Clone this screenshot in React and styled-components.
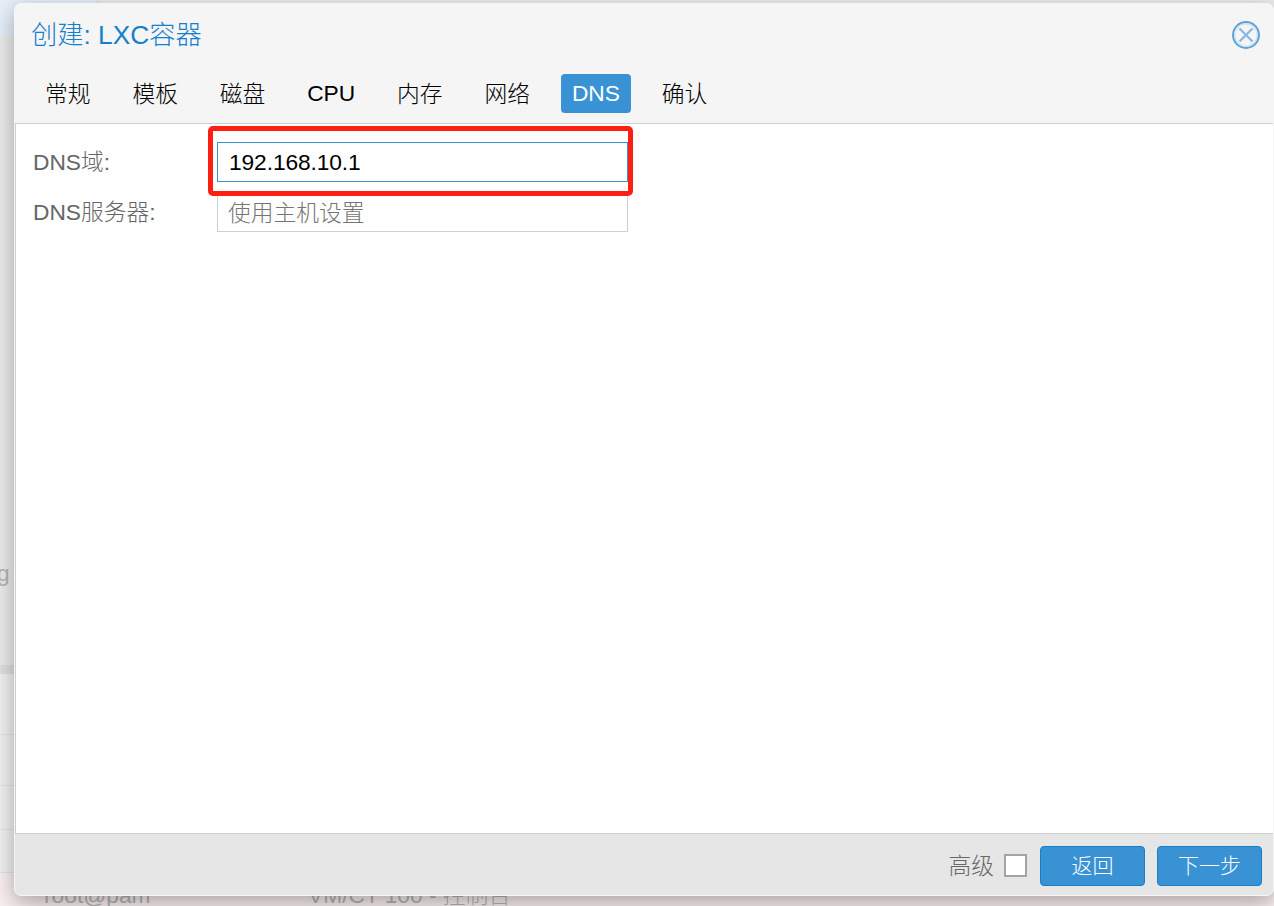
import React from 'react';
import styled, { createGlobalStyle } from 'styled-components';

const Global = createGlobalStyle`
  * { box-sizing: border-box; }
  body {
    margin: 0;
    font-family: "Liberation Sans", "Noto Sans CJK SC", sans-serif;
    font-size: 22.75px;
    font-weight: 300;
    color: #000;
  }
`;

const Screen = styled.div`
  position: relative;
  width: 1274px;
  height: 906px;
  overflow: hidden;
  background: #ebebeb;
`;

const Backdrop = styled.div`
  display: flex;
  flex-direction: column;
  height: 100%;
  color: #b4b4b4;
`;

const TreeTop = styled.div`
  flex: none;
  width: 98px;
  height: 36px;
  background: #e6eef8;
  border-right: 1px solid #d8d8d8;
`;

const TreeArea = styled.div`
  flex: none;
  height: 629px;
  padding-top: 523px;
  line-height: 28px;
  text-indent: -3px;
`;

const Splitter = styled.div`
  flex: none;
  height: 9px;
  background: #dfdfdf;
`;

const LogRow = styled.div`
  flex: none;
  height: ${(p) => p.$h}px;
  background: #f0f0f0;
  border-bottom: 1px solid #e2e2e2;
`;

const TaskRow = styled.div`
  flex: 1;
  display: flex;
  padding: 8px 0 0 44px;
  line-height: 28px;
  white-space: nowrap;
  background: #f9efef;
`;

const TaskCell = styled.span`
  flex: none;
  width: ${(p) => p.$w}px;
`;

const Dialog = styled.section`
  position: absolute;
  left: 14px;
  top: 3px;
  width: 1260px;
  height: 893px;
  display: flex;
  flex-direction: column;
  border: 1px solid #f5f5f5;
  border-radius: 7px;
  background: #f5f5f5;
  box-shadow: 0 7px 22px rgba(0, 0, 0, 0.32);
`;

const TitleBar = styled.header`
  flex: none;
  height: 62px;
  padding: 0 12px 0 16px;
  display: flex;
  align-items: center;
  justify-content: space-between;
`;

const Title = styled.h1`
  margin: 0;
  font-size: 26.25px;
  line-height: 36px;
  font-weight: 300;
  color: #157fcc;
`;

const CloseIcon = styled.svg`
  width: 30px;
  height: 30px;
`;

const Tabs = styled.nav`
  flex: none;
  height: 57px;
  padding: 8px 0 0 19px;
  display: flex;
  gap: 19.9px;
`;

const Tab = styled.div`
  height: 39px;
  padding: 0 11px;
  border-radius: 4px;
  line-height: ${(p) => (p.$latin ? 39 : 41)}px;
  color: ${(p) => (p.$active ? '#fff' : '#000')};
  background: ${(p) => (p.$active ? '#3892d4' : 'transparent')};
`;

const Body = styled.main`
  position: relative;
  flex: 1;
  padding: 18px 17px;
  border: 1px solid #cfcfcf;
  border-width: 1px 0 1px 1px;
  background: #fff;
`;

const Field = styled.div`
  display: flex;
  height: 40px;
  margin-bottom: 10px;
`;

const Label = styled.label`
  width: 184px;
  line-height: 41px;
  color: #666;
`;

const Input = styled.div`
  width: 411px;
  padding-left: ${(p) => (p.$placeholder ? 10 : 11)}px;
  line-height: ${(p) => (p.$placeholder ? 40 : 38)}px;
  letter-spacing: ${(p) => (p.$placeholder ? 0 : -0.1)}px;
  border: 1px solid ${(p) => (p.$focused ? '#3892d4' : '#cfcfcf')};
  color: ${(p) => (p.$placeholder ? '#757575' : '#000')};
`;

const Highlight = styled.div`
  position: absolute;
  left: 192px;
  top: 2px;
  width: 425px;
  height: 70px;
  border: 5px solid #ff1e12;
  border-radius: 5px;
`;

const Footer = styled.footer`
  flex: none;
  height: 61px;
  padding: 12px 11px 0 0;
  display: flex;
  justify-content: flex-end;
  border-radius: 0 0 6px 6px;
  background: #e6e6e6;
`;

const Advanced = styled.label`
  display: flex;
  line-height: 40px;
  color: #666;
`;

const Checkbox = styled.span`
  width: 23px;
  height: 23px;
  margin: 8px 13px 0 10px;
  border: 2px solid #a4a4a4;
  background: #fff;
`;

const Button = styled.button`
  width: 105px;
  height: 40px;
  margin: 0 0 0 ${(p) => p.$gap || 0}px;
  padding: 0;
  border: 1px solid #157fcc;
  border-radius: 4px;
  background: #3892d4;
  color: #fff;
  font: inherit;
  font-size: 21px;
  line-height: 38px;
`;

export default function App() {
  const tabs = ['常规', '模板', '磁盘', 'CPU', '内存', '网络', 'DNS', '确认'];
  return (
    <Screen>
      <Global />
      <Backdrop>
        <TreeTop />
        <TreeArea>g</TreeArea>
        <Splitter />
        <LogRow $h={61} />
        <LogRow $h={51} />
        <LogRow $h={44} />
        <LogRow $h={43} />
        <TaskRow>
          <TaskCell $w={264}>root@pam</TaskCell>
          <TaskCell $w={300}>VM/CT 100 - 控制台</TaskCell>
        </TaskRow>
      </Backdrop>
      <Dialog>
        <TitleBar>
          <Title>创建: LXC容器</Title>
          <CloseIcon viewBox="0 0 30 30" fill="none">
            <circle cx="15" cy="15" r="12.9" stroke="#5fa3d5" strokeWidth="2.1" />
            <circle cx="15" cy="15" r="11.2" stroke="#cfe2f2" strokeWidth="1.4" />
            <path d="M8.5 8.5L21.5 21.5M21.5 8.5L8.5 21.5" stroke="#8ab8e2" strokeWidth="2.3" />
          </CloseIcon>
        </TitleBar>
        <Tabs>
          {tabs.map((t) => (
            <Tab key={t} $active={t === 'DNS'} $latin={/^[A-Z]+$/.test(t)}>{t}</Tab>
          ))}
        </Tabs>
        <Body>
          <Field>
            <Label>DNS域:</Label>
            <Input $focused>192.168.10.1</Input>
          </Field>
          <Field>
            <Label>DNS服务器:</Label>
            <Input $placeholder>使用主机设置</Input>
          </Field>
          <Highlight />
        </Body>
        <Footer>
          <Advanced>
            高级
            <Checkbox />
          </Advanced>
          <Button>返回</Button>
          <Button $gap={12}>下一步</Button>
        </Footer>
      </Dialog>
    </Screen>
  );
}
